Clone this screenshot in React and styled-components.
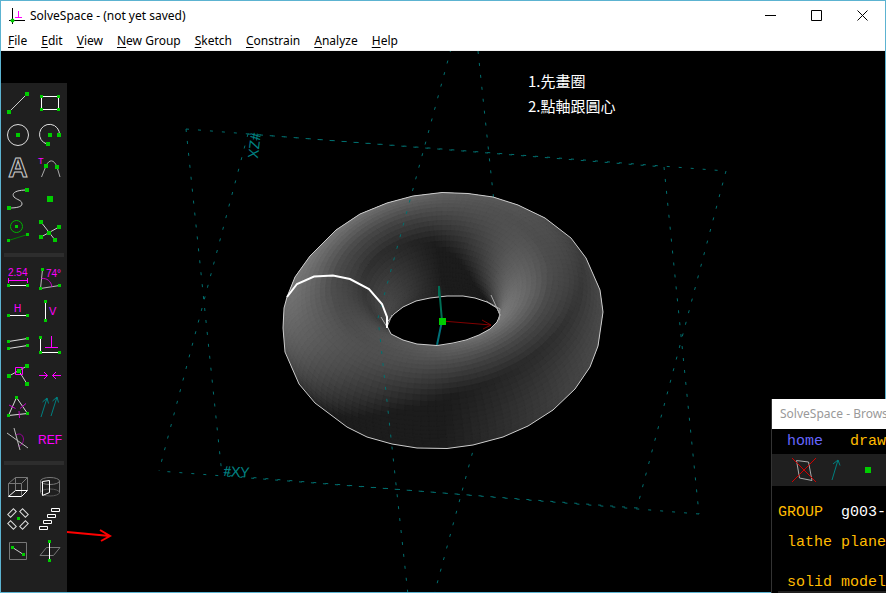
import React from "react";
import styled, { createGlobalStyle } from "styled-components";

const GlobalStyle = createGlobalStyle`
  * { box-sizing: border-box; }
  body { margin: 0; background: #fff; }
  button { border: 0; padding: 0; background: none; font: inherit; color: inherit; }
`;

const GREEN = "#00cc00";
const MAGENTA = "#ff00ff";
const TEAL = "#008080";
const PLANE = "#007070";

/* ---------- layout ---------- */

const Desktop = styled.div`
  min-height: 100vh;
  padding-bottom: 21px;
  display: flex;
  flex-direction: column;
  font-family: "Noto Sans", "Noto Sans CJK TC", sans-serif;
  font-size: 12px;
  color: #000;
`;

const Workspace = styled.div`
  position: relative;
  flex: 1;
  display: flex;
  flex-direction: column;
  overflow: hidden;
`;

const MainWindow = styled.main`
  flex: 1;
  display: flex;
  flex-direction: column;
  border: 1px solid #5cb3d1;
`;

const TitleBar = styled.header`
  display: flex;
  align-items: center;
  height: 29px;
  padding-left: 8px;
  gap: 5px;
`;

const Title = styled.h1`
  flex: 1;
  margin: 0;
  font-size: 12px;
  font-weight: 400;
  white-space: nowrap;
`;

const Captions = styled.div`
  display: flex;
`;

const CaptionButton = styled.button`
  display: grid;
  place-items: center;
  width: 46px;
  height: 28px;
`;

const MenuBar = styled.nav`
  display: flex;
  gap: 14px;
  height: 21px;
  padding-left: 7px;
  border-bottom: 1px solid #f0f0f0;
  line-height: 22px;
`;

const MenuItem = styled.button`
  white-space: nowrap;
  u { text-underline-offset: 2px; }
`;

const Canvas = styled.section`
  position: relative;
  flex: 1;
  display: flex;
  background: #000;
  overflow: hidden;
`;

const Scene = styled.svg`
  position: absolute;
  inset: 0;
  width: 100%;
  height: 100%;
`;

const Note = styled.p`
  position: absolute;
  left: 527px;
  top: 17px;
  margin: 0;
  color: #fff;
  font-family: "Noto Sans CJK TC", sans-serif;
  font-size: 15px;
  line-height: 25px;
`;

const ToolPanel = styled.aside`
  position: relative;
  width: 66px;
  margin-top: 32px;
  padding: 4px 1px;
  background: #1f1f1f;
`;

const ToolGroup = styled.div`
  display: grid;
  grid-template-columns: 32px 32px;
`;

const Divider = styled.hr`
  height: 4px;
  margin: 6px 2px;
  border: 0;
  background: #2d2d2d;
`;

const ToolButton = styled.button`
  display: block;
  width: 32px;
  height: 32px;
`;

const Glyph = styled.svg`
  display: block;
  width: 32px;
  height: 32px;
  fill: none;
  stroke: #fff;
  text {
    font-family: "Liberation Sans", sans-serif;
    fill: ${MAGENTA};
    stroke: none;
  }
`;

const BrowserWindow = styled.section`
  position: absolute;
  left: 771px;
  right: 0;
  top: 399px;
  bottom: 0;
  overflow: hidden;
  border-left: 1px solid #333;
  background: #000;
  color: #ffbb00;
  font-family: "Liberation Mono", monospace;
  font-size: 15px;
`;

const BrowserTitle = styled.h2`
  height: 30px;
  margin: 0;
  padding-left: 8px;
  background: #fff;
  color: #999;
  font-family: "Noto Sans", sans-serif;
  font-size: 12px;
  font-weight: 400;
  line-height: 30px;
  white-space: nowrap;
`;

const BrowserLinks = styled.nav`
  display: flex;
  gap: 27px;
  height: 25px;
  padding-left: 15px;
  line-height: 26px;
`;

const BrowserLink = styled.a`
  color: ${(p) => (p.$current ? "#6666ff" : "#ffbb00")};
  text-decoration: none;
`;

const BrowserTools = styled.div`
  display: flex;
  padding-left: 16px;
  background: #1f1f1f;
`;

const BrowserToolButton = styled(ToolButton)`
  flex: none;
`;

const Listing = styled.div`
  padding: 17px 0 0 6px;
`;

const ListLine = styled.div`
  display: flex;
  gap: 18px;
  height: ${(p) => p.$height || 30}px;
  padding-left: ${(p) => (p.$indent ? 9 : 0)}px;
  line-height: 20px;
  white-space: nowrap;
`;

const Value = styled.span`
  color: #fff;
`;

const ListPanel = styled.div`
  height: 20px;
  background: #1f1f1f;
`;

/* ---------- tool icons ---------- */

const Dots = ({ at, size = 3 }) =>
  at.map(([x, y]) => (
    <rect
      key={`${x},${y}`}
      x={x - size / 2}
      y={y - size / 2}
      width={size}
      height={size}
      fill={GREEN}
      stroke="none"
      shapeRendering="crispEdges"
    />
  ));

const sketchTools = [
  ["Line segment", <><path d="M7 25L25 7" stroke="#ccc" /><Dots size={4} at={[[7, 25], [25, 7]]} /></>],
  ["Rectangle", <><path d="M7.5 9.5H24.5V22.5H7.5Z" /><Dots at={[[7.5, 9.5], [24.5, 9.5], [7.5, 22.5], [24.5, 22.5]]} /></>],
  ["Circle", <><circle cx="16" cy="16" r="10.5" stroke="#ddd" /><Dots size={4} at={[[16, 16]]} /></>],
  ["Arc", <><path d="M25.5 16A10 10 0 1 0 13 25" stroke="#ddd" /><Dots size={4} at={[[16, 16], [25, 16], [14, 25]]} /></>],
  ["Text in font", <text x="16" y="26" textAnchor="middle" fontSize="27" fontWeight="700"><tspan fill="#1f1f1f" stroke="#ccc" strokeWidth="1">A</tspan></text>],
  ["Tangent arc", <><path d="M7.5 26L12 15C15 8 20 8 23 16L26 26" stroke="#aaa" /><text x="4" y="13" fontSize="9">T</text><Dots size={4} at={[[12, 15], [23, 16]]} /></>],
  ["Bezier spline", <><path d="M25 7C14 7 9 10 12 14C15 17 20 17 20 21C20 24 14 25 7 25" stroke="#ccc" /><Dots size={4} at={[[7, 25], [25, 7]]} /></>],
  ["Datum point", <Dots size={6} at={[[16, 16]]} />],
  ["Construction", <><circle cx="14.5" cy="11.5" r="6" stroke="#00b400" /><path d="M6.5 25.5L25.5 19.5" stroke="#008000" /><Dots at={[[14.5, 11.5], [6.5, 25.5], [25.5, 19.5]]} /></>],
  ["Split curves", <><path d="M7 7L21 25M7 22L25 12" stroke="#ccc" /><Dots size={4} at={[[7, 7], [25, 12], [15, 18], [7, 22], [21, 25]]} /></>],
];

const constraintTools = [
  ["Distance", <><text x="6" y="13" fontSize="10">2.54</text><path d="M6.5 17.5H25.5M6.5 15V20M25.5 15V20" stroke={MAGENTA} /><path d="M6 22.5H25" /><Dots at={[[6.5, 22.5], [25.5, 22.5]]} /></>],
  ["Angle", <><path d="M8.5 6.5L6.5 25.5L25.5 22.5" stroke="#bbb" /><path d="M7.5 15.5C13 15 17 18 18 24" stroke="#cc00cc" /><text x="12" y="14" fontSize="10">74°</text><Dots at={[[8.5, 6.5], [6.5, 25.5], [25.5, 22.5]]} /></>],
  ["Horizontal", <><text x="12" y="17" fontSize="10">H</text><path d="M6 20.5H26" /><Dots at={[[6.5, 20.5], [25.5, 20.5]]} /></>],
  ["Vertical", <><text x="15" y="20" fontSize="11">V</text><path d="M11.5 6V26" /><Dots at={[[11.5, 6.5], [11.5, 25.5]]} /></>],
  ["Parallel", <><path d="M6.5 14.5L25.5 11.5M6.5 21.5L25.5 18.5" stroke="#ddd" /><Dots at={[[6.5, 14.5], [25.5, 11.5], [6.5, 21.5], [25.5, 18.5]]} /></>],
  ["Perpendicular", <><path d="M6.5 10.5V25.5H25.5" /><path d="M17.5 9V20.5M11 20.5H24" stroke={MAGENTA} /><Dots at={[[6.5, 10.5], [6.5, 25.5], [25.5, 25.5]]} /></>],
  ["Point on line", <><path d="M7 17L25 7M17 12L25 25" stroke="#ccc" /><Dots size={4} at={[[7, 17], [17, 12], [25, 7], [25, 25]]} /><path d="M13.5 8.5H20.5V15.5H13.5Z" stroke={MAGENTA} /></>],
  ["Symmetric", <path d="M5 16.5H13.5M10 13L13.5 16.5L10 20M27 16.5H18.5M22 13L18.5 16.5L22 20" stroke={MAGENTA} />],
  ["Equal length", <><path d="M14.5 6.5L6.5 24.5L25.5 22.5Z" stroke="#ddd" /><path d="M7 14L13.5 17.5M18 17.5L24 12.5M17 20L17.5 27" stroke="#cc00cc" /><Dots at={[[14.5, 6.5], [6.5, 24.5], [25.5, 22.5]]} /></>],
  ["Same orientation", <path d="M7 26L13 7M8.5 11L13 7L14.5 12.5M17 25L23 6M18.5 10L23 6L24.5 11.5" stroke={TEAL} />],
  ["Other angle", <><path d="M14 12C17 10 21 11 21.5 16C21.5 20 19 23 16 23" stroke="#990099" /><path d="M5 10L26 25M12 5L18 27" stroke="#bbb" /></>],
  ["Reference", <text x="4" y="21" fontSize="12">REF</text>],
];

const groupTools = [
  ["Extrude", <><path d="M6.5 12.5H19.5L25.5 6.5H13.5ZM6.5 12.5V25M19.5 12.5V25M25.5 6.5V19M13.5 6.5V19" stroke="#777" /><path d="M6.5 25.5H19.5L25.5 19.5H13.5Z" /></>],
  ["Lathe", <><ellipse cx="16" cy="10" rx="9.5" ry="3.5" stroke="#777" /><ellipse cx="16" cy="21.5" rx="9.5" ry="3.5" stroke="#555" /><path d="M6.5 10V21.5M25.5 10V21.5" stroke="#777" /><path d="M8.5 10.5L15.5 9.5V21.5L8.5 24.5Z" /></>],
  ["Step rotating", <><g stroke="#ddd">{[[10, 10, -45], [22, 10, 45], [10, 22, 45], [22, 22, -45]].map(([x, y, a]) => <rect key={`${x}${y}`} x="-4" y="-2" width="8" height="4" transform={`translate(${x} ${y}) rotate(${a})`} />)}</g><Dots at={[[16.5, 15.5]]} /></>],
  ["Step translating", <path d="M17.5 5.5h8v3h-8zM13.5 11.5h8v3h-8zM9.5 17.5h8v3h-8zM5.5 23.5h8v3h-8z" />],
  ["Sketch in workplane", <><path d="M7.5 7.5H24.5V24.5H7.5Z" stroke="#777" /><path d="M10.5 12.5L21.5 19.5" stroke="#ccc" /><Dots at={[[10.5, 12.5], [21.5, 19.5]]} /></>],
  ["New workplane", <><path d="M6 20.5H19.5L26 12.5H12.5Z" stroke="#777" /><path d="M15.5 6V26" /><Dots at={[[15.5, 6.5], [15.5, 25.5]]} /></>],
];

const Tools = ({ items }) => (
  <ToolGroup>
    {items.map(([name, art]) => (
      <ToolButton key={name} type="button" aria-label={name}>
        <Glyph viewBox="0 0 32 32">{art}</Glyph>
      </ToolButton>
    ))}
  </ToolGroup>
);

/* ---------- 3D view ---------- */

const OUTLINE =
  "M287 297L295 277L310 256L336 230L360 214L387 203L413 196L442 192.500L468 193.500L493 197L518 205L545 218L571 238L586 258L600 290L603 312L598 346L590 367L575 389L553 410L528 426L503 437L473 445L447 448.500L417 448L392 444L367 437L347 427L315 403L299 384L285 352L283 328L284 308Z";
const HOLE =
  "M387 326L388 321L394 314L403 307L416 301L430 298L447 296L463 296L475 298L487 302L497 308L500 315L497 322L490 329L479 335L466 340L453 343L437 345.500L417 344L403 340L391 334Z";

/* Torus mesh in camera space (x right, y up, z towards the viewer). */
function buildTorus() {
  const MAJOR = 108.5;
  const MINOR = 51.5;
  const STEPS = 120;
  const SIDES = 60;
  const roll = (6 * Math.PI) / 180;
  const tilt = 0.705;
  const rise = Math.sqrt(1 - tilt * tilt);
  const u = [Math.cos(roll), Math.sin(roll), 0];
  const n = [-Math.sin(roll) * rise, Math.cos(roll) * rise, tilt];
  const v = [
    n[1] * u[2] - n[2] * u[1],
    n[2] * u[0] - n[0] * u[2],
    n[0] * u[1] - n[1] * u[0],
  ];
  const at = (i, j) => {
    const a = (i / STEPS) * 2 * Math.PI;
    const b = (j / SIDES) * 2 * Math.PI;
    const dir = [0, 1, 2].map((k) => Math.cos(a) * u[k] + Math.sin(a) * v[k]);
    const normal = dir.map((d, k) => Math.cos(b) * d + Math.sin(b) * n[k]);
    const point = dir.map((d, k) => MAJOR * d + MINOR * normal[k]);
    return { normal, point };
  };
  const faces = [];
  for (let i = 0; i < STEPS; i++) {
    for (let j = 0; j < SIDES; j++) {
      const mid = at(i + 0.5, j + 0.5);
      const [nx, ny, nz] = mid.normal;
      if (nz < -0.08) continue;
      const light =
        0.3 + Math.max(0, (ny - nx) / Math.SQRT2) + 0.5 * Math.max(0, nx);
      const shade = Math.min(255, Math.round(94 * light));
      const corners = [at(i, j), at(i + 1, j), at(i + 1, j + 1), at(i, j + 1)];
      faces.push({
        depth: mid.point[2],
        color: `rgb(${shade},${shade},${shade})`,
        points: corners
          .map(({ point: [x, y] }) => `${(443 + x).toFixed(1)},${(320.7 - y).toFixed(1)}`)
          .join(" "),
      });
    }
  }
  return faces.sort((a, b) => a.depth - b.depth);
}

const torusFaces = buildTorus();

const Model = () => (
  <Scene viewBox="1 51 884 541" preserveAspectRatio="xMinYMin slice" fill="none" aria-label="Torus model">
    <defs>
      <clipPath id="torus"><path clipRule="evenodd" d={OUTLINE + HOLE} /></clipPath>
    </defs>

    <g stroke={PLANE} strokeDasharray="3 9">
      <path d="M186 129L664 167" />
      <path d="M664 167L699 514" />
      <path d="M699 514L222 475" />
      <path d="M186 129L222 475" />
      <path d="M248 134L726 171" />
      <path d="M726 171L637 508" />
      <path d="M637 508L159 471" />
      <path d="M248 134L159 471" />
      <path d="M478 51L507 325L434 595" />
    </g>

    <g clipPath="url(#torus)">
      <path d={OUTLINE} fill="#4a4a4a" />
      {torusFaces.map((f, i) => (
        <polygon key={i} points={f.points} fill={f.color} stroke={f.color} />
      ))}
    </g>
    <path d={OUTLINE} stroke="#ccc" />
    <path d={HOLE} stroke="#ccc" />
    <path d="M491 295L500 315M381 317L387 327L392 315M486 301L500 309L499 320" stroke="#aaa" />
    <path d="M451 49L413 189L378 318L408 595" stroke={PLANE} strokeDasharray="3 9" />
    <path d="M287 297L297 284L314 276.500L333 275.500L350 279L369 289L382 304L387 317V328" stroke="#fff" strokeWidth="2" />

    <path d="M442 321L491 325M482 320L491 325L483 329" stroke="#800000" />
    <path d="M442 321L439 286V296" stroke="#006e55" strokeWidth="2" />
    <path d="M442 321L437 345" stroke="#007078" strokeWidth="2" />
    <rect x="439" y="318" width="7" height="7" fill={GREEN} />

    <g fill={TEAL} fontFamily="Lato, sans-serif" fontSize="14">
      <text x="223" y="476" transform="rotate(3 223 476)">#XY</text>
      <text x="251" y="132" transform="rotate(97 251 132)">#ZX</text>
    </g>
    <path d="M67 532L110 536M100 530L110 536L101 541" stroke="#f00" strokeWidth="2" />
  </Scene>
);

/* ---------- page ---------- */

const menus = ["File", "Edit", "View", "New Group", "Sketch", "Constrain", "Analyze", "Help"];

const captions = [
  ["Minimize", "M0 5.500H11"],
  ["Maximize", "M0.500 0.500H10.500V10.500H0.500Z"],
  ["Close", "M0.500 0.500L10.500 10.500M10.500 0.500L0.500 10.500"],
];

export default function App() {
  return (
    <Desktop>
      <GlobalStyle />
      <Workspace>
        <MainWindow>
          <TitleBar>
            <svg width="16" height="16" fill="none" aria-hidden="true">
              <path d="M3.500 0V16M0 12.500H16" stroke="#000" />
              <path d="M9.500 3V9.500M6 9.500H13" stroke={MAGENTA} />
              <circle cx="3.500" cy="12.500" r="2" fill={GREEN} />
            </svg>
            <Title>SolveSpace - (not yet saved)</Title>
            <Captions>
              {captions.map(([name, d]) => (
                <CaptionButton key={name} type="button" aria-label={name}>
                  <svg width="11" height="11" fill="none" stroke="#000"><path d={d} /></svg>
                </CaptionButton>
              ))}
            </Captions>
          </TitleBar>
          <MenuBar>
            {menus.map((m) => (
              <MenuItem key={m} type="button"><u>{m[0]}</u>{m.slice(1)}</MenuItem>
            ))}
          </MenuBar>
          <Canvas>
            <Model />
            <ToolPanel>
              <Tools items={sketchTools} />
              <Divider />
              <Tools items={constraintTools} />
              <Divider />
              <Tools items={groupTools} />
            </ToolPanel>
            <Note>1.先畫圈<br />2.點軸跟圓心</Note>
          </Canvas>
        </MainWindow>

        <BrowserWindow>
          <BrowserTitle>SolveSpace - Brows</BrowserTitle>
          <BrowserLinks>
            <BrowserLink href="#home" $current>home</BrowserLink>
            <BrowserLink href="#draw">draw</BrowserLink>
          </BrowserLinks>
          <BrowserTools>
            <BrowserToolButton type="button" aria-label="Show workplanes">
              <Glyph viewBox="0 0 32 32">
                <path d="M8.500 6.500L20.500 8L24 26.500L11.500 24Z" stroke="#aaa" />
                <path d="M4 4L28 28M28 4L4 28" stroke="#d00000" />
              </Glyph>
            </BrowserToolButton>
            <BrowserToolButton type="button" aria-label="Show normals">
              <Glyph viewBox="0 0 32 32">
                <path d="M12 26L18 6M13 10L18 6L20 11.500" stroke={TEAL} />
              </Glyph>
            </BrowserToolButton>
            <BrowserToolButton type="button" aria-label="Show points">
              <Glyph viewBox="0 0 32 32"><Dots size={6} at={[[16, 16]]} /></Glyph>
            </BrowserToolButton>
          </BrowserTools>
          <Listing>
            <ListLine><span>GROUP</span><Value>g003-</Value></ListLine>
            <ListLine $indent $height={40}>lathe plane</ListLine>
            <ListLine $indent $height={18}>solid model</ListLine>
            <ListPanel />
          </Listing>
        </BrowserWindow>
      </Workspace>
    </Desktop>
  );
}
